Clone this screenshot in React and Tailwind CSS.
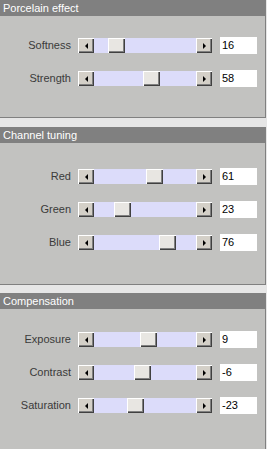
import React from "react";

const bevel =
  "shadow-[inset_1px_1px_#ffffff,inset_-1px_-1px_#404040,inset_-2px_-2px_#808080]";

function Slider({ value, min, max }) {
  const left = Math.round(((value - min) / (max - min)) * 85);
  return (
    <div className="flex h-[15px] w-[134px]">
      <div className={`flex h-[15px] w-4 items-center justify-center bg-[#d4d0c8] ${bevel}`}>
        <div className="h-0 w-0 border-y-[3px] border-r-[3px] border-y-transparent border-r-black" />
      </div>
      <div className="relative h-[15px] flex-1 bg-[#dcdcfa]">
        <div
          className={`absolute top-0 h-[15px] w-[17px] bg-[#e8e6e2] ${bevel}`}
          style={{ left }}
        />
      </div>
      <div className={`flex h-[15px] w-4 items-center justify-center bg-[#d4d0c8] ${bevel}`}>
        <div className="h-0 w-0 border-y-[3px] border-l-[3px] border-y-transparent border-l-black" />
      </div>
    </div>
  );
}

function Row({ label, value, min, max }) {
  return (
    <div className="flex h-[17px] items-center">
      <div className="w-[71px] text-right text-[11px] leading-[17px] text-[#3a3a3a]">{label}</div>
      <div className="ml-[7px]">
        <Slider value={value} min={min} max={max} />
      </div>
      <div className="ml-2 h-[17px] w-[37px] bg-white pl-[2px] text-[11px] leading-[17px] text-black">
        {value}
      </div>
    </div>
  );
}

function Panel({ title, className, bodyClass, rows, min, max }) {
  return (
    <div className={`w-[266px] border-r border-b border-[#808080] bg-[#c2c2c0] ${className}`}>
      <div className="h-4 bg-[#808080] pl-[3px] text-[11px] leading-4 text-white">{title}</div>
      <div className={`flex flex-col gap-4 ${bodyClass}`}>
        {rows.map((r) => (
          <Row key={r[0]} label={r[0]} value={r[1]} min={min} max={max} />
        ))}
      </div>
    </div>
  );
}

export default function App() {
  return (
    <div className="flex h-[449px] w-[267px] flex-col overflow-hidden bg-[#e6e6e6] font-['Liberation_Sans',Arial,sans-serif]">
      <Panel
        title="Porcelain effect"
        className=""
        bodyClass="pt-[21px] pb-[30px]"
        min={0}
        max={100}
        rows={[
          ["Softness", 16],
          ["Strength", 58],
        ]}
      />
      <Panel
        title="Channel tuning"
        className="mt-[9px]"
        bodyClass="pt-[25px] pb-[33px]"
        min={0}
        max={100}
        rows={[
          ["Red", 61],
          ["Green", 23],
          ["Blue", 76],
        ]}
      />
      <Panel
        title="Compensation"
        className="mt-[8px] shrink-0"
        bodyClass="pt-[22px] pb-[80px]"
        min={-100}
        max={100}
        rows={[
          ["Exposure", 9],
          ["Contrast", -6],
          ["Saturation", -23],
        ]}
      />
    </div>
  );
}
